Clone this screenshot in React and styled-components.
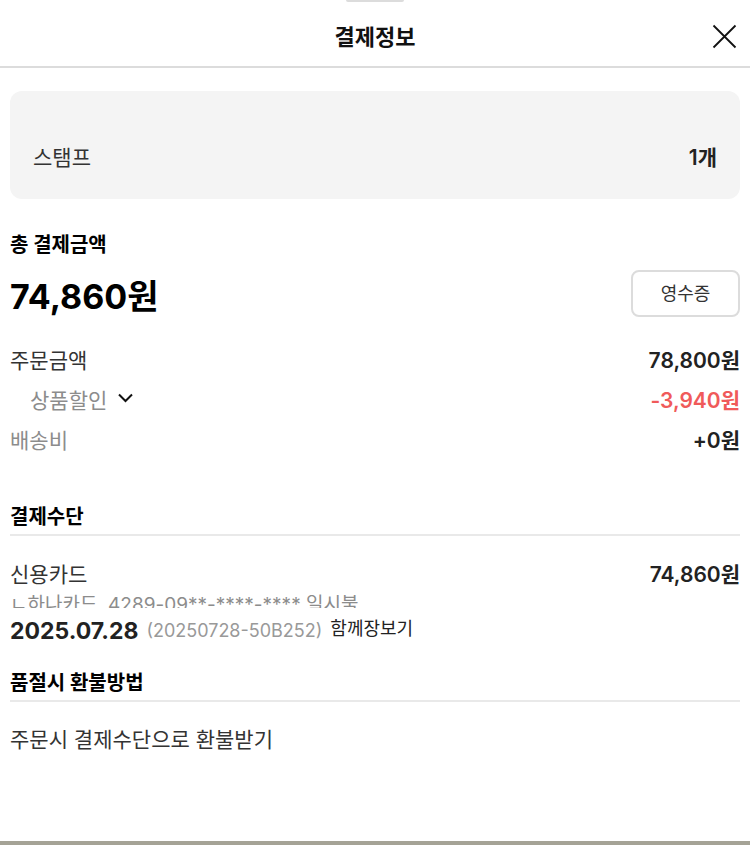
import React from "react";
import styled, { createGlobalStyle } from "styled-components";

const GlobalStyle = createGlobalStyle`
  * {
    box-sizing: border-box;
  }

  body {
    margin: 0;
    background: #fff;
    font-family: Inter, "Noto Sans CJK KR", sans-serif;
    font-size: 21px;
    line-height: 30px;
    color: #222;
  }
`;

const Sheet = styled.div`
  display: flex;
  flex-direction: column;
  min-height: 100vh;
  background: #fff;
  border-bottom: 4px solid #a5a396;
`;

const Handle = styled.div`
  width: 58px;
  height: 2px;
  margin: 0 auto;
  background: #dcdcdc;
  border-radius: 0 0 2px 2px;
`;

const Header = styled.header`
  display: grid;
  grid-template-columns: 1fr auto 1fr;
  align-items: center;
  height: 66px;
  padding: 5px 13px 0;
  border-bottom: 2px solid #dcdcdc;
`;

const Title = styled.h1`
  grid-column: 2;
  margin: 0;
  font-size: 22px;
  font-weight: 700;
  color: #111;
`;

const CloseButton = styled.button`
  justify-self: end;
  display: flex;
  padding: 0;
  border: none;
  background: none;
  color: #111;
  cursor: pointer;
`;

const Content = styled.main`
  padding: 23px 10px 60px;
`;

const StampBox = styled.div`
  display: flex;
  justify-content: space-between;
  padding: 52px 23px 26px;
  border-radius: 12px;
  background: #f4f4f4;
`;

const SectionTitle = styled.h2`
  margin: 0;
  padding-bottom: ${props => props.$line ? '2px' : '0'};
  border-bottom: ${props => props.$line ? '2px solid #e9e9e9' : 'none'};
  font-size: 20px;
  font-weight: 700;
  color: #000;
`;

const TotalSection = styled.section`
  padding-top: 31px;
`;

const TotalRow = styled.div`
  display: flex;
  justify-content: space-between;
  align-items: flex-start;
  padding: 10px 0 22px;
`;

const TotalPrice = styled.strong`
  font-size: 34px;
  line-height: 54px;
  font-weight: 700;
  color: #000;
`;

const ReceiptButton = styled.button`
  width: 109px;
  height: 47px;
  padding: 0 0 4px;
  border: 2px solid #dcdcdc;
  border-radius: 8px;
  background: #fff;
  color: #333;
  font-family: inherit;
  font-size: 18px;
  cursor: pointer;
`;

const Row = styled.div`
  display: flex;
  justify-content: space-between;
  align-items: center;
  margin-bottom: ${props => props.$spaced ? '10px' : '0'};
`;

const Label = styled.span`
  color: ${props => props.$muted ? '#8c8c8c' : '#333'};
`;

const DiscountToggle = styled.button`
  display: flex;
  align-items: center;
  gap: 11px;
  padding: 0 0 0 20px;
  border: none;
  background: none;
  color: #8c8c8c;
  font: inherit;
  cursor: pointer;
`;

const Amount = styled.strong`
  font-weight: 600;
  color: ${props => props.$discount ? '#f05a5a' : '#222'};
`;

const MethodSection = styled.section`
  padding-top: 46px;
`;

const MethodBody = styled.div`
  padding-top: 24px;
`;

const CardDetail = styled.p`
  height: 18px;
  margin: 0;
  overflow: hidden;
  font-size: 19px;
  color: #8c8c8c;
  white-space: pre;
`;

const OrderLine = styled.div`
  display: flex;
  align-items: center;
  gap: 8px;
  padding-top: 6px;
`;

const OrderDate = styled.strong`
  font-size: 23px;
  font-weight: 700;
`;

const OrderNumber = styled.span`
  font-size: 18px;
  color: #999;
`;

const OrderType = styled.span`
  font-size: 18px;
  padding-bottom: 4px;
`;

const RefundSection = styled.section`
  padding-top: 20px;
`;

const RefundText = styled.p`
  margin: 23px 0 0;
  color: #333;
`;

const CloseIcon = () => (
  <svg width="25" height="25" viewBox="0 0 25 25" fill="none" stroke="currentColor" strokeWidth="1.8">
    <path d="M1.5 1.5l22 22M23.5 1.5l-22 22" />
  </svg>
);

const ChevronIcon = () => (
  <svg width="16" height="16" viewBox="0 0 16 16" fill="none" stroke="#111" strokeWidth="2">
    <path d="M1 1.5l6.5 6.5L14 1.5" />
  </svg>
);

const App = () => (
  <Sheet>
    <GlobalStyle />
    <Handle />
    <Header>
      <Title>결제정보</Title>
      <CloseButton type="button" aria-label="닫기">
        <CloseIcon />
      </CloseButton>
    </Header>
    <Content>
      <StampBox>
        <Label>스탬프</Label>
        <Amount>1개</Amount>
      </StampBox>

      <TotalSection>
        <SectionTitle>총 결제금액</SectionTitle>
        <TotalRow>
          <TotalPrice>74,860원</TotalPrice>
          <ReceiptButton type="button">영수증</ReceiptButton>
        </TotalRow>
        <Row $spaced>
          <Label>주문금액</Label>
          <Amount>78,800원</Amount>
        </Row>
        <Row $spaced>
          <DiscountToggle type="button">
            상품할인
            <ChevronIcon />
          </DiscountToggle>
          <Amount $discount>-3,940원</Amount>
        </Row>
        <Row>
          <Label $muted>배송비</Label>
          <Amount>+0원</Amount>
        </Row>
      </TotalSection>

      <MethodSection>
        <SectionTitle $line>결제수단</SectionTitle>
        <MethodBody>
          <Row>
            <Label>신용카드</Label>
            <Amount>74,860원</Amount>
          </Row>
          <CardDetail>ㄴ하나카드  4289-09**-****-**** 일시불</CardDetail>
        </MethodBody>
        <OrderLine>
          <OrderDate>2025.07.28</OrderDate>
          <OrderNumber>(20250728-50B252)</OrderNumber>
          <OrderType>함께장보기</OrderType>
        </OrderLine>
      </MethodSection>

      <RefundSection>
        <SectionTitle $line>품절시 환불방법</SectionTitle>
        <RefundText>주문시 결제수단으로 환불받기</RefundText>
      </RefundSection>
    </Content>
  </Sheet>
);

export default App;
